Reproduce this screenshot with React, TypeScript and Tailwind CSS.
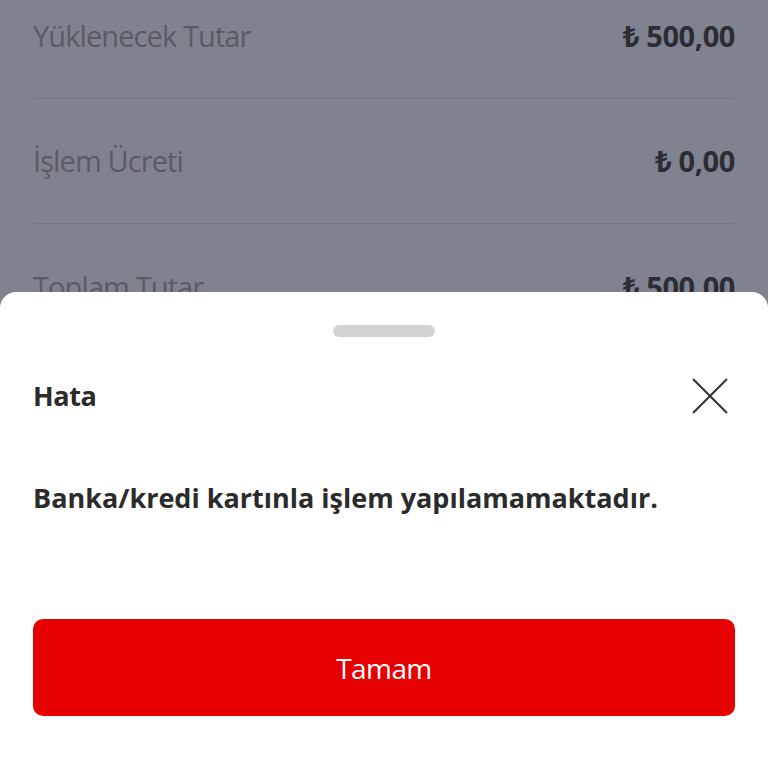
import React from 'react';

const rows = [
  { label: 'Yüklenecek Tutar', value: '₺ 500,00' },
  { label: 'İşlem Ücreti', value: '₺ 0,00' },
  { label: 'Toplam Tutar', value: '₺ 500,00' },
];

const App: React.FC = () => {
  return (
    <div
      className="relative w-[768px] h-[768px] overflow-hidden bg-[#81828f]"
      style={{ fontFamily: '"Open Sans", "Noto Sans", sans-serif' }}
    >
      {/* summary behind the overlay */}
      <div className="px-[33px] -mt-[26px]">
        {rows.map((row, i) => (
          <div
            key={row.label}
            className={`flex items-center justify-between h-[125px] ${
              i < rows.length - 1 ? 'border-b border-[#74757f]' : ''
            }`}
          >
            <span className="text-[29px] tracking-[-0.9px] text-[#5a5b66]">{row.label}</span>
            <span className="text-[29px] font-bold tracking-[-0.4px] text-[#2b2c35]">{row.value}</span>
          </div>
        ))}
      </div>

      {/* bottom sheet */}
      <div className="absolute left-0 right-0 top-[292px] bottom-0 bg-white rounded-t-[16px] px-[33px]">
        <div className="flex justify-center pt-[33px]">
          <div className="w-[102px] h-[12px] rounded-full bg-[#d2d2d2]" />
        </div>

        <div className="flex items-center justify-between mt-[41px] h-[36px]">
          <span className="text-[27px] font-bold tracking-[-0.4px] text-[#2b2b2b]">Hata</span>
          <button className="w-[36px] h-[36px] mr-[7px] flex items-center justify-center">
            <svg width="36" height="36" viewBox="0 0 36 36" fill="none" stroke="#333" strokeWidth="2">
              <path d="M1 1 L35 35 M35 1 L1 35" />
            </svg>
          </button>
        </div>

        <p className="mt-[67px] text-[27px] font-bold tracking-[0px] text-[#2b2b2b] leading-[34px]">
          Banka/kredi kartınla işlem yapılamamaktadır.
        </p>

        <button className="mt-[104px] w-full h-[97px] rounded-[10px] bg-[#e60000] text-white text-[28px] tracking-[-0.6px]">
          Tamam
        </button>
      </div>
    </div>
  );
};

export default App;
